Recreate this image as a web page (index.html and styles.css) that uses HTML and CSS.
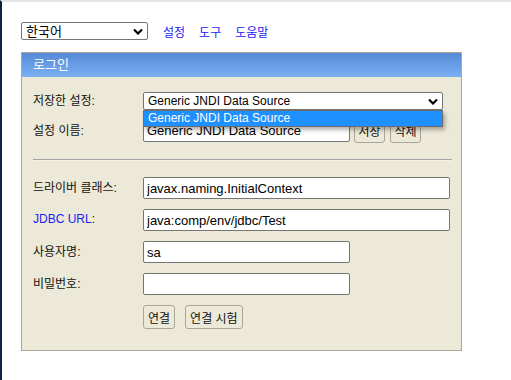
FILE: index.html
```html
<!DOCTYPE html>
<html lang="ko">
<head>
    <meta charset="UTF-8">
    <meta name="viewport" content="width=device-width, initial-scale=1.0">
    <title>H2 Console</title>
    <link rel="stylesheet" href="styles.css">
</head>
<body>
    <div class="toolbar">
        <div class="select-wrap lang">
            <select class="select">
                <option>한국어</option>
            </select>
            <svg class="chevron" width="10" height="7" viewBox="0 0 10 7"><path d="M1 1.5 L5 5.5 L9 1.5" fill="none" stroke="#000" stroke-width="2.2"/></svg>
        </div>
        <a href="#">설정</a>
        <a href="#">도구</a>
        <a href="#">도움말</a>
    </div>

    <div class="login">
        <div class="login-head">로그인</div>
        <div class="login-body">
            <div class="row row-select">
                <span class="label">저장한 설정:</span>
                <div class="select-wrap setting">
                    <select class="select">
                        <option>Generic JNDI Data Source</option>
                    </select>
                    <svg class="chevron" width="10" height="7" viewBox="0 0 10 7"><path d="M1 1.5 L5 5.5 L9 1.5" fill="none" stroke="#000" stroke-width="2.2"/></svg>
                    <div class="dropdown">Generic JNDI Data Source</div>
                </div>
            </div>
            <div class="row row-name">
                <span class="label">설정 이름:</span>
                <input class="field short" type="text" value="Generic JNDI Data Source">
                <button class="btn small">저장</button>
                <button class="btn small">삭제</button>
            </div>
            <hr class="sep">
            <div class="row">
                <span class="label">드라이버 클래스:</span>
                <input class="field long" type="text" value="javax.naming.InitialContext">
            </div>
            <div class="row">
                <span class="label"><a href="#">JDBC URL</a>:</span>
                <input class="field long" type="text" value="java:comp/env/jdbc/Test">
            </div>
            <div class="row">
                <span class="label">사용자명:</span>
                <input class="field short" type="text" value="sa">
            </div>
            <div class="row">
                <span class="label">비밀번호:</span>
                <input class="field short" type="password" value="">
            </div>
            <div class="row row-buttons">
                <span class="label"></span>
                <button class="btn">연결</button>
                <button class="btn">연결 시험</button>
            </div>
        </div>
    </div>
</body>
</html>
```

FILE: styles.css
```css
html {
    height: 100%;
}
body {
    margin: 0;
    min-height: 100%;
    box-sizing: border-box;
    border-top: 2px solid #e4e4e4;
    border-left: 2px solid #10213f;
    padding: 20px 0 0 19px;
    background-color: #fff;
    color: #111;
    font-family: "Liberation Sans", "Noto Sans CJK KR", sans-serif;
    font-size: 12px;
}
a {
    color: #1c1cf5;
    text-decoration: none;
}
.toolbar {
    display: flex;
    align-items: center;
    gap: 14px;
    height: 18px;
}
.toolbar .lang {
    margin-right: 1px;
}
.select-wrap {
    position: relative;
    display: flex;
}
.select {
    appearance: none;
    -webkit-appearance: none;
    margin: 0;
    height: 18px;
    padding: 0 0 0 4px;
    border: 1px solid #767676;
    border-radius: 2px;
    background: #fff;
    color: #000;
    font-family: "Liberation Sans", "Noto Sans CJK KR", sans-serif;
    font-size: 12px;
}
.lang .select {
    width: 127px;
    font-size: 13px;
}
.setting .select {
    width: 300px;
}
.chevron {
    position: absolute;
    right: 5px;
    top: 6px;
}
.dropdown {
    position: absolute;
    left: 0;
    top: 18px;
    width: 300px;
    height: 17px;
    box-sizing: border-box;
    padding-left: 4px;
    border: 1px solid #6c6c6c;
    background: #1e90ff;
    color: #fff;
    font-size: 12px;
    line-height: 15px;
    box-shadow: 2px 3px 4px rgba(0, 0, 0, 0.3);
    z-index: 2;
}
.login {
    margin-top: 12px;
    width: 441px;
    box-sizing: border-box;
    border: 1px solid #aca899;
    background: #ece9d8;
}
.login-head {
    height: 24px;
    padding-left: 11px;
    line-height: 23px;
    color: #fff;
    font-size: 13px;
    background: linear-gradient(#5689d6, #7bb0f3);
}
.login-body {
    padding: 15px 11px 21px 11px;
}
.row {
    display: flex;
    align-items: center;
    height: 22px;
    margin-bottom: 10px;
}
.row-select {
    height: 18px;
    margin-bottom: 8px;
}
.row-name {
    height: 25px;
    margin-bottom: 0;
}
.row-buttons {
    height: 24px;
    margin-bottom: 0;
}
.label {
    width: 110px;
    flex: none;
    font-size: 12px;
    margin-top: -3px;
}
.field {
    height: 22px;
    box-sizing: border-box;
    margin: 0;
    padding: 0 3px;
    border: 1px solid #767676;
    border-radius: 2px;
    background: #fff;
    color: #000;
    font-family: "Liberation Sans", sans-serif;
    font-size: 13px;
}
.field.long {
    width: 308px;
}
.field.short {
    width: 207px;
}
.btn {
    height: 24px;
    margin: 0 10px 0 0;
    padding: 0 4px;
    border: 1px solid #aaa79a;
    border-radius: 3px;
    background: #ece9d8;
    color: #111;
    font-family: "Noto Sans CJK KR", sans-serif;
    font-size: 12px;
}
.btn.small {
    height: 25px;
    margin: 0 0 0 4px;
    width: 31px;
    padding: 0;
}
.btn.small + .btn.small {
    margin-left: 5px;
}
.sep {
    margin: 16px 0 16px 0;
    width: 419px;
    border: none;
    border-top: 1px solid #a4a4a4;
    border-bottom: 1px solid #f4f2e8;
}
```
